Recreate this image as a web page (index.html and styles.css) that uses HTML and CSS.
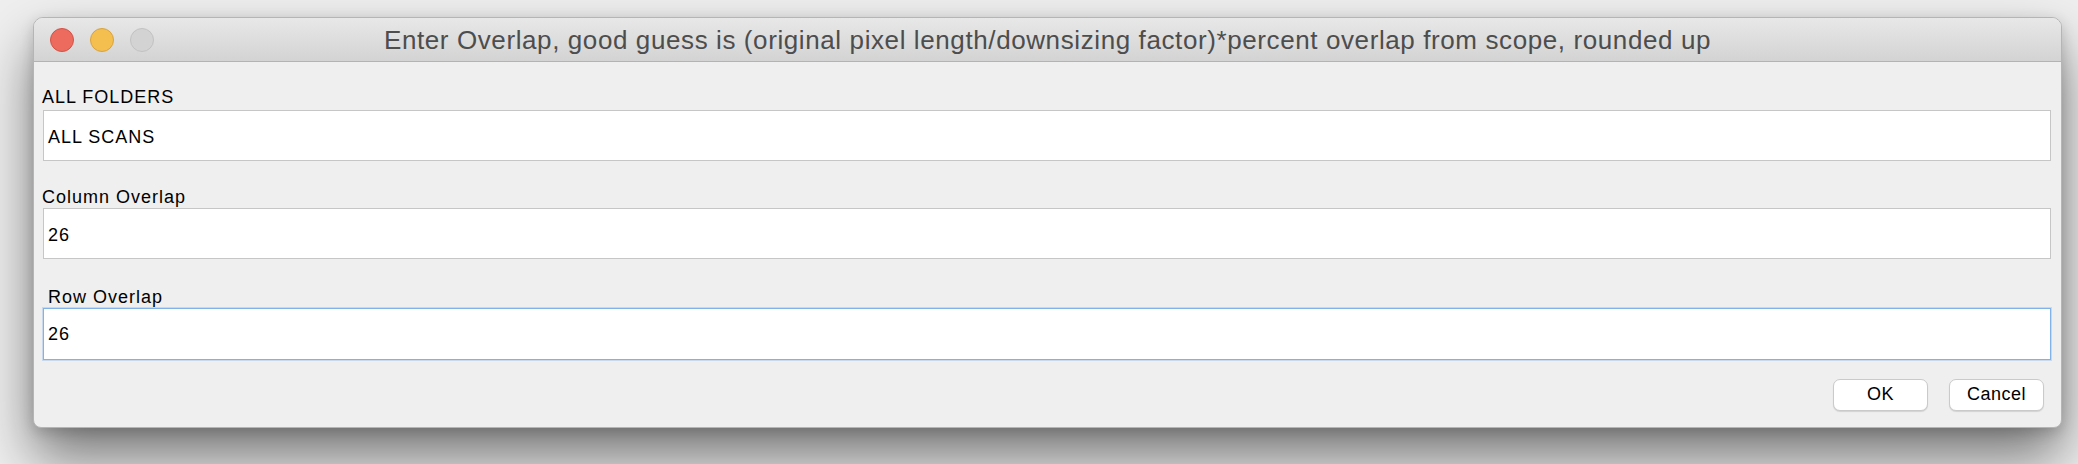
FILE: index.html
```html
<!DOCTYPE html>
<html>
<head>
<meta charset="utf-8">
<link rel="stylesheet" href="styles.css">
</head>
<body>
<div class="desk">
  <div class="window">
    <div class="titlebar">
      <div class="lights">
        <span class="light close"></span>
        <span class="light min"></span>
        <span class="light max"></span>
      </div>
      <div class="title">Enter Overlap, good guess is (original pixel length/downsizing factor)*percent overlap from scope, rounded up</div>
      <div></div>
    </div>
    <div class="content">
      <div class="group g1">
        <div class="label">ALL FOLDERS</div>
        <div class="field">ALL SCANS</div>
      </div>
      <div class="group g2">
        <div class="label">Column Overlap</div>
        <div class="field">26</div>
      </div>
      <div class="group g3">
        <div class="label indent">Row Overlap</div>
        <div class="field focused">26</div>
      </div>
      <div class="buttons">
        <div class="btn">OK</div>
        <div class="btn">Cancel</div>
      </div>
    </div>
  </div>
</div>
</body>
</html>
```
FILE: styles.css
```css
html, body {
  margin: 0;
  padding: 0;
  width: 2078px;
  height: 464px;
  overflow: hidden;
  background: #efefef;
}
.desk {
  padding: 17px 16px 0 33px;
}
.window {
  height: 411px;
  box-sizing: border-box;
  border: 1px solid #b5b5b5;
  border-radius: 10px 10px 8px 8px;
  background: #efefef;
  overflow: hidden;
  box-shadow: 0 30px 55px rgba(0,0,0,0.5), 0 4px 14px rgba(0,0,0,0.16);
  display: flex;
  flex-direction: column;
  font-family: "Liberation Sans", Arial, sans-serif;
}
.titlebar {
  height: 43px;
  border-bottom: 1px solid #b3b3b3;
  background: linear-gradient(#e8e8e8, #d3d3d3);
  display: grid;
  grid-template-columns: 1fr auto 1fr;
  align-items: center;
}
.lights {
  display: flex;
  gap: 16px;
  padding-left: 16px;
  padding-top: 1px;
}
.light {
  width: 22px;
  height: 22px;
  border-radius: 50%;
  border: 1px solid transparent;
}
.close { background: #ed6a5e; border-color: #d35246; }
.min { background: #f5bf4f; border-color: #d8a33e; }
.max { background: #d3d3d3; border-color: #c2c2c2; }
.title {
  font-family: "Liberation Sans", Arial, sans-serif;
  font-size: 26px;
  color: #4d4d4d;
  letter-spacing: 0.6px;
  padding-top: 2px;
  white-space: nowrap;
}
.content {
  flex: 1;
  padding: 0 10px 0 9px;
  display: flex;
  flex-direction: column;
}
.label {
  font-size: 18px;
  line-height: 22px;
  letter-spacing: 1px;
  color: #000;
  margin-left: -1px;
}
.label.indent { margin-left: 5px; }
.g1 { margin-top: 24px; }
.g1 .label { margin-bottom: 2px; }
.g2 { margin-top: 25px; }
.g3 { margin-top: 27px; }
.field {
  background: #fff;
  border: 1px solid #c6c6c6;
  font-size: 18px;
  line-height: 22px;
  letter-spacing: 1px;
  padding: 15px 4px 12px 4px;
  color: #000;
}
.field.focused {
  border-color: #80b3ea;
  box-shadow: 0 0 0 1px rgba(128,179,234,0.35);
  padding-top: 14px;
  padding-bottom: 14px;
}
.buttons {
  display: flex;
  justify-content: flex-end;
  gap: 21px;
  margin-top: 19px;
  margin-right: 7px;
}
.btn {
  width: 93px;
  background: #fff;
  border: 1px solid #cacaca;
  border-radius: 7px;
  box-shadow: 0 1px 1px rgba(0,0,0,0.12);
  font-size: 18px;
  line-height: 22px;
  letter-spacing: 0.5px;
  text-align: center;
  padding-top: 3px;
  box-sizing: content-box;
  height: 27px;
}
```
